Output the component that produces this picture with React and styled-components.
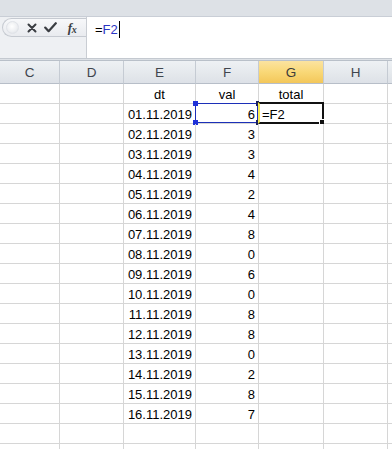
import React from "react";
import styled, { createGlobalStyle, css } from "styled-components";

const Global = createGlobalStyle`
  html, body { margin: 0; padding: 0; background: #ffffff; overflow: hidden; }
  body { font-family: "Liberation Sans", Arial, sans-serif; }
`;

const Page = styled.div`
  width: 392px;
  height: 449px;
  overflow: hidden;
  display: flex;
  flex-direction: column;
  background: #ffffff;
`;

const TopBand = styled.div`
  height: 16px;
  flex: none;
  background: #dde1e6;
  border-bottom: 1px solid #c9ced6;
`;

const FormulaRow = styled.div`
  height: 41px;
  flex: none;
  display: flex;
  border-bottom: 1px solid #c4c9d0;
`;

const Controls = styled.div`
  width: 86px;
  flex: none;
  background: #eef0f3;
  padding-top: 1px;
  box-sizing: border-box;
`;

const Pill = styled.div`
  height: 19px;
  margin-left: 2px;
  border: 1px solid #c6cad1;
  border-right: none;
  border-radius: 10px 0 0 10px;
  background: linear-gradient(#f7f8fa, #e9ebef);
  display: flex;
  align-items: center;
  box-sizing: border-box;
`;

const Dimple = styled.span`
  width: 13px;
  height: 13px;
  margin-left: 3px;
  border-radius: 50%;
  background: radial-gradient(circle at 45% 40%, #ffffff 0%, #eceef1 60%, #d5d9df 100%);
  border: 1px solid #e0e3e8;
  box-sizing: border-box;
`;

const IconSlot = styled.span`
  display: flex;
  align-items: center;
  justify-content: center;
  width: ${(p) => p.$w}px;
  margin-left: ${(p) => p.$ml}px;
  height: 17px;
  color: #3a3d42;
`;

const Fx = styled.span`
  font-family: "Liberation Serif", "Times New Roman", serif;
  font-style: italic;
  font-weight: bold;
  font-size: 13px;
  color: #3a3d42;
  letter-spacing: -0.5px;
  & > sub {
    font-size: 10px;
    vertical-align: -1px;
  }
`;

const Input = styled.div`
  flex: 1;
  background: #ffffff;
  border-left: 1px solid #c9cdd3;
  padding: 4px 0 0 8px;
  font-size: 13px;
  line-height: 18px;
  color: #000;
  display: flex;
  align-items: flex-start;
`;

const Ref = styled.span`
  color: #2b35c4;
`;

const Caret = styled.span`
  display: inline-block;
  width: 1px;
  height: 17px;
  background: #000;
  margin-left: 1px;
`;

const Gap = styled.div`
  height: 1px;
  flex: none;
  background: #dde1e6;
  border-bottom: 1px solid #b9c0c9;
`;

const Sheet = styled.div`
  display: grid;
  grid-template-columns: 60px 64px 72px 63px 65px 64px 1fr;
  grid-auto-rows: 20px;
  grid-template-rows: 23px;
`;

const Head = styled.div`
  box-sizing: border-box;
  border-right: 1px solid #c5cbd3;
  border-bottom: 1px solid #b7bec8;
  background: ${(p) =>
    p.$active
      ? "linear-gradient(#fbe3a0 0%, #f9d877 50%, #f3c75a 100%)"
      : "linear-gradient(#eef1f4 0%, #e4e8ec 60%, #dde1e7 100%)"};
  color: ${(p) => (p.$active ? "#3b3b3b" : "#3f454d")};
  font-size: 13.5px;
  display: flex;
  align-items: center;
  justify-content: center;
  padding-top: 1px;
`;

const Cell = styled.div`
  position: relative;
  box-sizing: border-box;
  border-right: 1px solid #d6d6d6;
  border-bottom: 1px solid #d6d6d6;
  font-size: 13px;
  line-height: 15px;
  color: #000;
  display: flex;
  align-items: flex-end;
  padding: 0 3px 1px 3px;
  white-space: nowrap;
  ${(p) =>
    p.$align === "right" &&
    css`
      justify-content: flex-end;
    `}
  ${(p) =>
    p.$align === "center" &&
    css`
      justify-content: center;
    `}
`;

const RefBox = styled.span`
  position: absolute;
  left: -1px;
  top: -1px;
  right: 0;
  bottom: 0;
  border: 1px solid #1c2fb8;
  pointer-events: none;
`;

const Handle = styled.span`
  position: absolute;
  width: ${(p) => (p.$dark ? 3 : 5)}px;
  height: 5px;
  background: ${(p) => (p.$dark ? "#1a1f5c" : "#1e30d8")};
  ${(p) => (p.$x === "l" ? "left: -3px;" : "right: -2px;")}
  ${(p) => (p.$y === "t" ? "top: -3px;" : "bottom: -3px;")}
`;

const Active = styled.span`
  position: absolute;
  left: -1px;
  top: -2px;
  right: -1px;
  bottom: -1px;
  border: 2px solid #111;
  border-left: 2px solid #f4ea52;
  pointer-events: none;
`;

const FillHandle = styled.span`
  position: absolute;
  right: -3px;
  bottom: -3px;
  width: 4px;
  height: 4px;
  background: #111;
  border: 1px solid #fff;
`;

const cols = ["C", "D", "E", "F", "G", "H", ""];
const vals = [6, 3, 3, 4, 2, 4, 8, 0, 6, 0, 8, 8, 0, 2, 8, 7];

function CancelIcon() {
  return (
    <svg width="10" height="10" viewBox="0 0 10 10">
      <path d="M1.5 1.5 L8.5 8.5 M8.5 1.5 L1.5 8.5" stroke="#3a3d42" strokeWidth="2" strokeLinecap="round" />
    </svg>
  );
}

function EnterIcon() {
  return (
    <svg width="13" height="11" viewBox="0 0 13 11">
      <path d="M1.2 5.6 L4.6 9.2 L11.8 1.2" stroke="#3a3d42" strokeWidth="2.2" fill="none" strokeLinecap="round" strokeLinejoin="round" />
    </svg>
  );
}

export default function App() {
  const rows = [];
  rows.push({ e: "dt", f: "val", g: "total", header: true });
  vals.forEach((v, i) => {
    rows.push({ e: `${String(i + 1).padStart(2, "0")}.11.2019`, f: String(v), g: "" });
  });
  rows.push({ e: "", f: "", g: "" });
  rows.push({ e: "", f: "", g: "" });

  return (
    <Page>
      <Global />
      <TopBand />
      <FormulaRow>
        <Controls>
          <Pill>
            <Dimple />
            <IconSlot $w={14} $ml={6}>
              <CancelIcon />
            </IconSlot>
            <IconSlot $w={16} $ml={3}>
              <EnterIcon />
            </IconSlot>
            <IconSlot $w={16} $ml={6}>
              <Fx>
                f<sub>x</sub>
              </Fx>
            </IconSlot>
          </Pill>
        </Controls>
        <Input>
          =<Ref>F2</Ref>
          <Caret />
        </Input>
      </FormulaRow>
      <Gap />
      <Sheet>
        {cols.map((c, i) => (
          <Head key={"h" + i} $active={c === "G"}>
            {c}
          </Head>
        ))}
        {rows.map((r, ri) => (
          <React.Fragment key={ri}>
            <Cell />
            <Cell />
            <Cell $align={r.header ? "center" : "right"}>{r.e}</Cell>
            <Cell $align={r.header ? "center" : "right"}>
              {r.f}
              {ri === 1 && (
                <RefBox>
                  <Handle $x="l" $y="t" />
                  <Handle $x="l" $y="b" />
                  <Handle $x="r" $y="t" $dark />
                  <Handle $x="r" $y="b" $dark />
                </RefBox>
              )}
            </Cell>
            <Cell $align={r.header ? "center" : "left"}>
              {ri === 1 ? "=F2" : r.g}
              {ri === 1 && (
                <Active>
                  <FillHandle />
                </Active>
              )}
            </Cell>
            <Cell />
            <Cell />
          </React.Fragment>
        ))}
      </Sheet>
    </Page>
  );
}
